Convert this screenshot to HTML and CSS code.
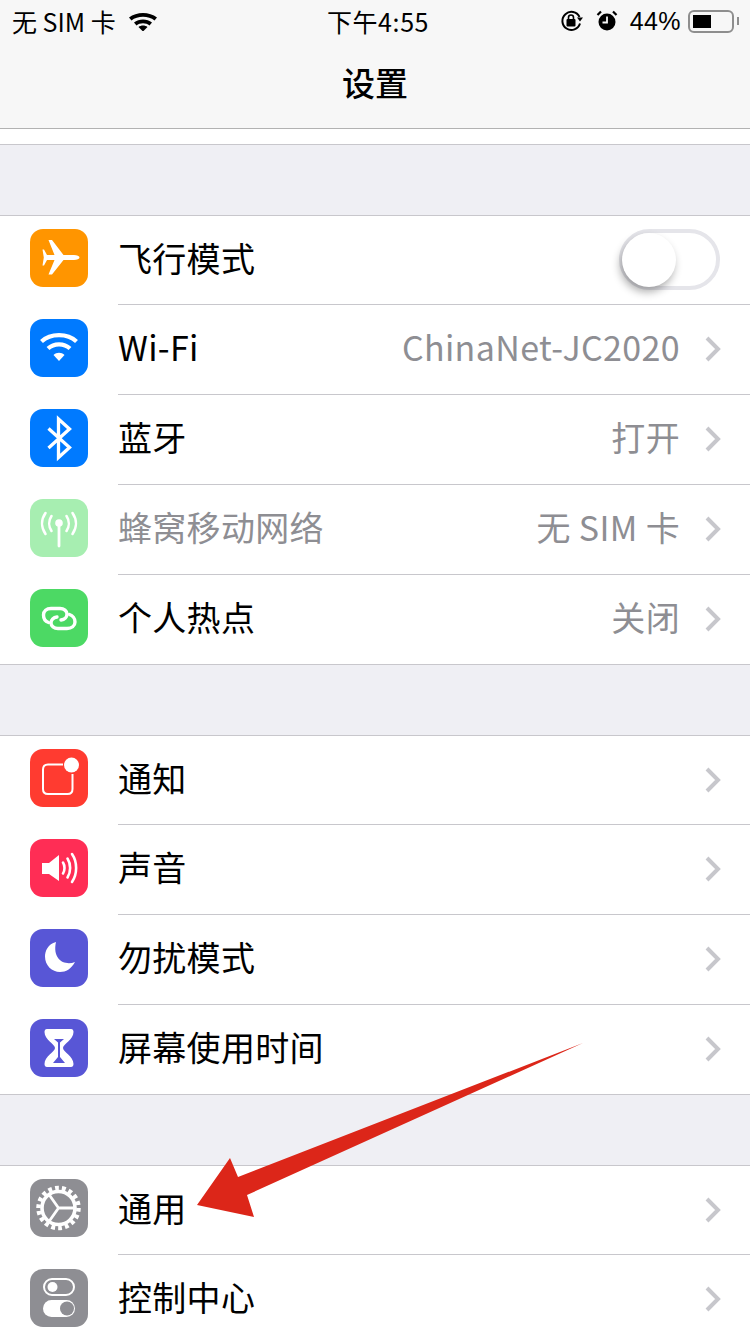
FILE: index.html
```html
<!DOCTYPE html>
<html lang="zh-CN">
<head>
  <meta charset="UTF-8" />
  <meta name="viewport" content="width=device-width, initial-scale=1.0"/>
  <title>设置</title>
  <link rel="stylesheet" href="styles.css">
</head>
<body>
  <svg width="0" height="0" class="defs">
    <symbol id="chev" viewBox="0 0 16 28"><path d="M2 3l11 11L2 25" fill="none" stroke="#c7c7cc" stroke-width="4"/></symbol>
  </svg>

  <header class="topbar">
    <div class="status">
      <div class="status-left">
        <span>无 SIM 卡</span>
        <svg class="st-wifi" width="30" height="20" viewBox="0 0 30 20"><path d="M1 6.500C8.500.5 21.500.5 29 6.500L26.500 9.500C20.500 4.500 9.500 4.500 3.500 9.500z M6 11.500C11 7.500 19 7.500 24 11.500L21.500 14.500C18 11.500 12 11.500 8.500 14.500z M10.500 16C13 14 17 14 19.500 16L15 20.500z" fill="#000"/></svg>
      </div>
      <div class="status-time">下午4:55</div>
      <div class="status-right">
        <svg width="24" height="22" viewBox="0 0 24 22"><path d="M20 13.500A9 9 0 1 1 19.500 7" fill="none" stroke="#000" stroke-width="2"/><path d="M17 7.500h6l-3 4z" fill="#000"/><rect x="6.500" y="9" width="9" height="7.500" rx="1" fill="#000"/><path d="M8.500 9V7.500a2.500 2.500 0 0 1 5 0V9" fill="none" stroke="#000" stroke-width="1.600"/></svg>
        <svg class="st-alarm" width="22" height="22" viewBox="0 0 22 22"><circle cx="11" cy="12" r="8.500" fill="#000"/><path d="M11 6.500V12.500H6.500" fill="none" stroke="#f7f7f7" stroke-width="1.800"/><path d="M1.500 5L5 1.500M20.500 5L17 1.500" stroke="#000" stroke-width="2.200"/></svg>
        <span class="st-pct">44%</span>
        <div class="battery"><div class="battery-fill"></div></div>
        <div class="battery-tip"></div>
      </div>
    </div>
    <h1 class="title">设置</h1>
  </header>

  <div class="strip"></div>
  <div class="gap"></div>

  <section class="group">
    <div class="row">
      <svg class="icon" viewBox="0 0 58 58"><rect width="58" height="58" rx="13" fill="#ff9500"/><path d="M49.500 28.500C49.500 27 47 26 44 26H33.500L22 11H18.500L24.500 26H17L14 20.500H12.500L13.800 28.500L12.500 36.500H14L17 31H24.500L18.500 45.500H22L33.500 31H44C47 31 49.500 30 49.500 28.500z" fill="#fff"/></svg>
      <div class="row-body">
        <span class="label">飞行模式</span>
        <div class="switch"><div class="knob"></div></div>
      </div>
    </div>
    <div class="row">
      <svg class="icon" viewBox="0 0 58 58"><rect width="58" height="58" rx="13" fill="#007aff"/><path d="M11.500 22.500C20.500 14 37.500 14 46.500 22.500M18 29.500C24 24 34 24 40 29.500" fill="none" stroke="#fff" stroke-width="4.200"/><path d="M23.500 36C26.500 33 31.500 33 34.500 36L29 42z" fill="#fff"/></svg>
      <div class="row-body">
        <span class="label">Wi-Fi</span>
        <span class="value">ChinaNet-JC2020</span>
        <svg class="chev"><use href="#chev"/></svg>
      </div>
    </div>
    <div class="row">
      <svg class="icon" viewBox="0 0 58 58"><rect width="58" height="58" rx="13" fill="#007aff"/><path d="M18.500 19.500L39.500 38.500L28.500 48.500V10L39.500 20L18.500 39" fill="none" stroke="#fff" stroke-width="3.300"/></svg>
      <div class="row-body">
        <span class="label">蓝牙</span>
        <span class="value">打开</span>
        <svg class="chev"><use href="#chev"/></svg>
      </div>
    </div>
    <div class="row">
      <svg class="icon" viewBox="0 0 58 58"><rect width="58" height="58" rx="13" fill="#a7eeb1"/><circle cx="29" cy="24" r="3.800" fill="#fff"/><path d="M29 26V47" stroke="#fff" stroke-width="2.800" stroke-linecap="round"/><path d="M15.500 14C11 20.500 11 28.500 15.500 35M42.500 14C47 20.500 47 28.500 42.500 35M21.500 17C18.500 21.500 18.500 27.500 21.500 32M36.500 17C39.500 21.500 39.500 27.500 36.500 32" fill="none" stroke="#fff" stroke-width="2.600" stroke-linecap="round"/></svg>
      <div class="row-body">
        <span class="label label-off">蜂窝移动网络</span>
        <span class="value">无 SIM 卡</span>
        <svg class="chev"><use href="#chev"/></svg>
      </div>
    </div>
    <div class="row">
      <svg class="icon" viewBox="0 0 58 58"><rect width="58" height="58" rx="13" fill="#4cd964"/><path d="M18.500 33.500C15.500 32.500 13.500 29.500 13.500 26C13.500 22 16.500 19.500 21 19.500H30C34 19.500 37 22 37 25C37 28 34.500 30.500 31 31" fill="none" stroke="#fff" stroke-width="3.400" stroke-linecap="round"/><path d="M39.500 25.500C42.500 26.500 45 29.500 45 33C45 37 41.500 39.500 37 39.500H28C24 39.500 21 37 21 34C21 31 23.500 28.500 27 28" fill="none" stroke="#fff" stroke-width="3.400" stroke-linecap="round"/></svg>
      <div class="row-body last">
        <span class="label">个人热点</span>
        <span class="value">关闭</span>
        <svg class="chev"><use href="#chev"/></svg>
      </div>
    </div>
  </section>

  <div class="gap"></div>

  <section class="group">
    <div class="row">
      <svg class="icon" viewBox="0 0 58 58"><rect width="58" height="58" rx="13" fill="#ff3b30"/><path d="M33 15.500H18C15 15.500 13 17.500 13 20.500V40C13 43 15 45 18 45H37.500C40.500 45 42.500 43 42.500 40V25" fill="none" stroke="#fff" stroke-width="2"/><circle cx="41.500" cy="16" r="7.500" fill="#fff"/></svg>
      <div class="row-body">
        <span class="label">通知</span>
        <svg class="chev"><use href="#chev"/></svg>
      </div>
    </div>
    <div class="row">
      <svg class="icon" viewBox="0 0 58 58"><rect width="58" height="58" rx="13" fill="#ff2d55"/><path d="M12 24H19L29 16V42L19 35H12z" fill="#fff"/><path d="M33 23.500C35 26.500 35 31.500 33 34.500M37.500 19.500C41 25 41 33 37.500 38.500M42 15C47.500 23 47.500 35 42 43" fill="none" stroke="#fff" stroke-width="2.600" stroke-linecap="round"/></svg>
      <div class="row-body">
        <span class="label">声音</span>
        <svg class="chev"><use href="#chev"/></svg>
      </div>
    </div>
    <div class="row">
      <svg class="icon" viewBox="0 0 58 58"><rect width="58" height="58" rx="13" fill="#5856d6"/><path d="M26 13C18 15 15 22 15 27.500C15 36.500 22 43 30 43C36 43 41 40 45 33C35 37 22 31 26 13z" fill="#fff"/></svg>
      <div class="row-body">
        <span class="label">勿扰模式</span>
        <svg class="chev"><use href="#chev"/></svg>
      </div>
    </div>
    <div class="row">
      <svg class="icon" viewBox="0 0 58 58"><rect width="58" height="58" rx="13" fill="#5856d6"/><path d="M17 10H41C43 10 43.500 11.500 43.500 13C43.500 21 33 25 33 29C33 33 43.500 37 43.500 45C43.500 47 42.500 48 41 48H17C15.500 48 14.500 47 14.500 45C14.500 37 25 33 25 29C25 25 14.500 21 14.500 13C14.500 11.500 15 10 17 10z" fill="#fff"/><path d="M24 20H34L30 23.500V38L35 44H23L28 38V23.500z" fill="#5856d6"/></svg>
      <div class="row-body last">
        <span class="label">屏幕使用时间</span>
        <svg class="chev"><use href="#chev"/></svg>
      </div>
    </div>
  </section>

  <div class="gap"></div>

  <section class="group">
    <div class="row">
      <svg class="icon" viewBox="0 0 58 58"><rect width="58" height="58" rx="13" fill="#8e8e93"/><circle cx="28.500" cy="29" r="16.500" fill="none" stroke="#fff" stroke-width="3.600"/><circle cx="28.500" cy="29" r="20" fill="none" stroke="#fff" stroke-width="4.500" pathLength="180" stroke-dasharray="5.500 4.500"/><path d="M28.500 29L19 15.500M28.500 29H45M28.500 29L19 42.500" fill="none" stroke="#fff" stroke-width="2.800"/></svg>
      <div class="row-body">
        <span class="label">通用</span>
        <svg class="chev"><use href="#chev"/></svg>
      </div>
    </div>
    <div class="row">
      <svg class="icon" viewBox="0 0 58 58"><rect width="58" height="58" rx="13" fill="#8e8e93"/><rect x="14" y="10" width="30" height="16" rx="8" fill="none" stroke="#fff" stroke-width="2"/><circle cx="22.500" cy="18" r="5" fill="#fff"/><rect x="13" y="31" width="32" height="17" rx="8.500" fill="#fff"/><circle cx="37" cy="39.500" r="7" fill="#8e8e93"/></svg>
      <div class="row-body">
        <span class="label">控制中心</span>
        <svg class="chev"><use href="#chev"/></svg>
      </div>
    </div>
  </section>

  <svg class="arrow" width="750" height="1334" viewBox="0 0 750 1334"><path d="M583 1043L238 1177L230 1158L197 1205L254 1217L247 1195z" fill="#dc2619"/></svg>
</body>
</html>
```

FILE: styles.css
```css
html, body {
  height: 1334px;
  overflow: hidden;
}

body {
  position: relative;
  margin: 0;
  background-color: #fff;
  color: #000;
  font-family: 'Noto Sans CJK SC', 'Liberation Sans', sans-serif;
}

.defs {
  position: absolute;
}

.topbar {
  height: 128px;
  background-color: #f7f7f7;
  border-bottom: 1px solid #b2b2b2;
}

.status {
  display: grid;
  grid-template-columns: 1fr auto 1fr;
  align-items: center;
  height: 42px;
  padding: 0 12px;
  font-size: 25px;
  line-height: 40px;
}

.status-left {
  display: flex;
  align-items: center;
  gap: 12px;
}

.status-time {
  padding-left: 6px;
  letter-spacing: 0.6px;
}

.status-right {
  display: flex;
  align-items: center;
  justify-content: flex-end;
}

.st-alarm {
  margin-left: 12px;
}

.st-pct {
  margin-left: 12px;
  font-family: 'Liberation Sans', sans-serif;
  font-size: 25px;
  letter-spacing: 0.4px;
}

.battery {
  width: 46px;
  height: 23px;
  margin-left: 7px;
  padding: 3px;
  box-sizing: border-box;
  border: 2px solid #8e8e8e;
  border-radius: 6px;
}

.battery-fill {
  width: 18px;
  height: 100%;
  background-color: #000;
}

.battery-tip {
  width: 2px;
  height: 8px;
  margin-left: 3px;
  margin-right: -1px;
  background-color: #8e8e8e;
}

.title {
  margin: 0;
  height: 86px;
  font-size: 33px;
  font-weight: 500;
  line-height: 80px;
  text-align: center;
}

.strip {
  height: 15px;
  background-color: #fff;
  border-bottom: 1px solid #c8c7cc;
}

.gap {
  height: 70px;
  background-color: #efeff4;
}

.group {
  background-color: #fff;
  border-top: 1px solid #c8c7cc;
  border-bottom: 1px solid #c8c7cc;
}

.row {
  display: flex;
  height: 90px;
  box-sizing: border-box;
  padding-left: 30px;
}

.row:first-child,
.row:last-child {
  height: 89px;
}

.icon {
  flex: none;
  width: 58px;
  height: 58px;
  margin-top: 14px;
}

.row:first-child .icon {
  margin-top: 13px;
}

.row-body {
  flex: 1;
  display: flex;
  align-items: center;
  margin-left: 30px;
  padding-right: 29px;
  padding-bottom: 6px;
  border-bottom: 1px solid #c8c7cc;
}

.row-body.last {
  border-bottom: none;
}

.label {
  font-size: 34px;
  letter-spacing: 0.3px;
}

.label-off {
  color: #8e8e93;
}

.value {
  margin-left: auto;
  font-size: 34px;
  letter-spacing: 0.35px;
  color: #8e8e93;
}

.chev {
  flex: none;
  width: 16px;
  height: 28px;
  margin-left: 25px;
  margin-top: 5px;
}

.row-body > .label + .chev {
  margin-left: auto;
}

.switch {
  position: relative;
  width: 101px;
  height: 61px;
  margin-left: auto;
  margin-right: 1px;
  margin-top: 5px;
  box-sizing: border-box;
  border: 4px solid #e5e5ea;
  border-radius: 31px;
  background-color: #fff;
}

.knob {
  position: absolute;
  left: -1px;
  top: 0;
  width: 54px;
  height: 54px;
  border-radius: 50%;
  background-color: #fff;
  box-shadow: -2px 5px 9px rgba(0, 0, 0, 0.32);
}

.arrow {
  position: absolute;
  left: 0;
  top: 0;
  pointer-events: none;
}
```
